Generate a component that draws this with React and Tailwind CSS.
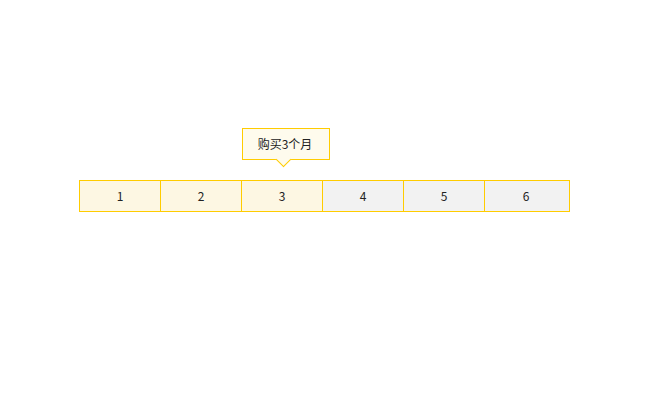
export default function App() {
  const cells = [
    { n: 1, on: true },
    { n: 2, on: true },
    { n: 3, on: true },
    { n: 4, on: false },
    { n: 5, on: false },
    { n: 6, on: false },
  ];

  return (
    <div
      className="h-[400px] w-[650px] bg-white pl-[79px] pt-[180px] text-[12px] text-[#222]"
      style={{ fontFamily: '"Noto Sans CJK SC", "Noto Sans", sans-serif' }}
    >
      <div className="relative flex w-[491px] border-y border-l border-[#ffcc00]">
        {cells.map((c, i) => (
          <div
            key={c.n}
            className={
              (i === 5 ? "w-[85px] pr-[2px] " : "w-[81px] ") +
              "flex h-[30px] items-center justify-center border-r border-[#ffcc00] " +
              (c.on ? "bg-[#fdf7e3]" : "bg-[#f2f2f2]")
            }
          >
            {c.n}
          </div>
        ))}

        <div className="absolute left-[162px] top-[-53px] flex h-[32px] w-[88px] items-center justify-center border border-[#ffcc00] bg-[#fefbed] pr-[2px]">
          购买3个月
          <div className="absolute bottom-[-6px] left-[35px] h-[11px] w-[11px] rotate-45 border-b border-r border-[#ffcc00] bg-[#fefbed]"></div>
        </div>
      </div>
    </div>
  );
}
